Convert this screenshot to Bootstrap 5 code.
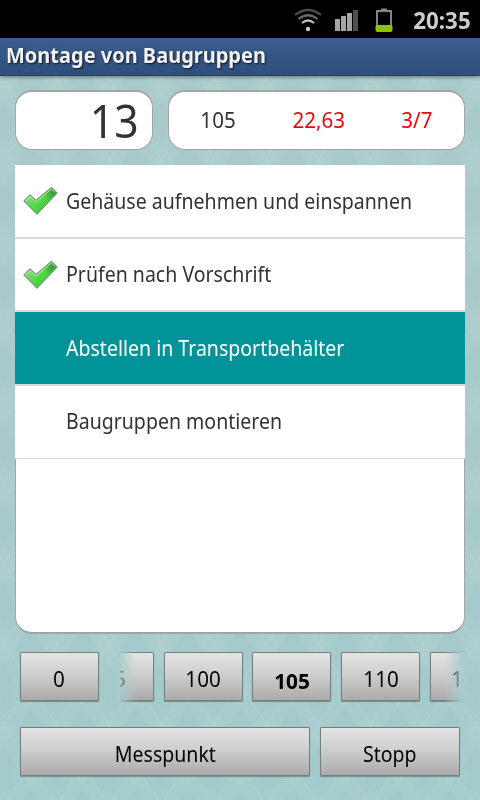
<!DOCTYPE html>
<html lang="de">
<head>
<meta charset="utf-8">
<meta name="viewport" content="width=device-width, initial-scale=1">
<title>Montage von Baugruppen</title>
<link rel="stylesheet" href="https://cdn.jsdelivr.net/npm/bootstrap@5.3.0/dist/css/bootstrap.min.css">
<style>
body{width:480px;height:800px;font-family:"Noto Sans","Open Sans",sans-serif;font-size:21px;line-height:28px;color:#333;
 background:
 repeating-linear-gradient(57deg,rgba(255,255,255,.08) 0 1px,transparent 1px 10px,rgba(60,130,140,.02) 10px 32px,rgba(255,255,255,.02) 32px 44px),
 repeating-linear-gradient(-57deg,rgba(255,255,255,.08) 0 1px,transparent 1px 10px,rgba(60,130,140,.02) 10px 32px,rgba(255,255,255,.02) 32px 44px),
 linear-gradient(#adcccd,#abcccd 70%,#a6cdce)}
.statusbar{height:38px;background:#000;color:#ccc;font-size:24px;padding:2px 9px 0 0}
.statusbar svg{margin-right:9px}
.titlebar{height:38px;background:linear-gradient(#3b5e8d,#2e4e7c);border-bottom:1px solid #274061;box-shadow:0 1px 4px rgba(0,0,0,.45);color:#f2f2f2;font-size:21px;text-shadow:1px 1px 2px #0a1526;padding:0 0 4px 6px}
.sq{display:inline-block;transform:scaleX(.93);white-space:nowrap}
.sq-l{transform-origin:left}
.sq-r{transform-origin:right}
.titlebar .sq{transform:scaleX(.952)}
.sq.num{transform:scaleX(.98)}
.fw-bold .sq.num{transform:scaleX(.99)}
.top-row{padding:14px 0 0 15px;gap:15px}
.panel{background:#fff;border:1px solid #a3a5a5;border-top-width:2px;border-radius:17px}
.counter{width:138px;height:60px;font-size:46px;padding:0 13px 2px 0}
.figures{width:297px;height:60px;padding:0 31px 2px 31px}
.figures .red{color:#de0c10}
.steps{width:450px;height:469px;margin:15px 0 0 15px;background:#fff;border:solid #a3a5a5;border-width:0 1px 2px;border-radius:0 0 17px 17px}
.steps ul{margin:0 -1px}
.steps li{height:73.5px;padding-left:7px;border-bottom:2px solid #d9dbdb;background:#fff}
.steps li:last-child{border-bottom-width:1px;padding-bottom:1px}
.steps li.current{background:#009499;color:#fff}
.steps .mark-slot{width:44px}
.key{height:49px;width:79px;flex:none;padding:5px 0 0;border:1px solid #777d7e;border-radius:1px;background:linear-gradient(#e3e3e3,#cfcfcf 45%,#ababab);box-shadow:0 1px 1px rgba(0,0,0,.3);color:#000;font-size:21px;line-height:28px}
.key-stop{width:140px}
.key-row{padding:18px 0 0 20px}
.action-row{padding:23px 20px 0;gap:10px}
.strip{width:344px;height:52px;margin-left:21px;overflow:hidden;-webkit-mask-image:linear-gradient(90deg,transparent -3px,#000 15px,#000 325px,transparent);mask-image:linear-gradient(90deg,transparent -3px,#000 15px,#000 325px,transparent)}
.strip .track{gap:9.7px;margin-left:-45px}
</style>
<script src="https://cdn.jsdelivr.net/npm/bootstrap@5.3.0/dist/js/bootstrap.bundle.min.js"></script>
</head>
<body class="overflow-hidden">
<svg width="0" height="0" class="position-absolute" aria-hidden="true">
 <defs>
  <linearGradient id="g" x1="0" y1="0" x2="1" y2="1"><stop offset="0" stop-color="#b5eeb0"/><stop offset=".4" stop-color="#62dc57"/><stop offset=".7" stop-color="#39d334"/><stop offset="1" stop-color="#35b034"/></linearGradient>
  <linearGradient id="d" x1="0" y1="1" x2="1" y2="0"><stop offset=".5" stop-color="#17701e" stop-opacity="0"/><stop offset=".95" stop-color="#17601e" stop-opacity=".65"/></linearGradient>
  <symbol id="tick" viewBox="0 0 36 30">
   <path d="M2 15 8 9 14 14.500 29.500 1.500 35 7 15 28Z" fill="url(#g)" stroke="#769d74" stroke-width="1.200" stroke-linejoin="round"/>
   <path d="M14 15.500 29.500 2.500 34 7 15 27Z" fill="url(#d)"/>
   <path d="M3.500 15 8 10.500 14 16 29.400 3.100 32.500 6" fill="none" stroke="#d3f7ce" stroke-opacity=".75"/>
  </symbol>
 </defs>
</svg>
<div class="statusbar d-flex align-items-center justify-content-end fw-bold">
 <svg width="110" height="38" viewBox="290 0 110 38" aria-hidden="true">
  <g fill="none" stroke-width="2.2"><path d="M295 14Q308 4 321 14" stroke="#4c4c4c"/><path d="M298.500 18Q308 10.500 317.500 18" stroke="#686868"/><path d="M302 22Q308 17 314 22" stroke="#bbb"/></g>
  <circle cx="308" cy="28" r="2.200" fill="#ccc"/>
  <g fill="#a5a5a5"><rect x="335" y="18" width="5" height="12"/><rect x="341" y="15" width="5" height="15"/><rect x="347" y="12" width="5" height="18"/></g><rect x="353" y="9" width="5" height="21" fill="#505050"/>
  <path d="M377 25V10H391V25M381 8.500H387" fill="none" stroke="#858585" stroke-width="2"/><rect x="375.500" y="24" width="17" height="7" rx="2" fill="#88c40a"/>
 </svg>
 <span class="sq sq-r">20:35</span>
</div>
<div class="titlebar d-flex align-items-center fw-bold"><span class="sq sq-l">Montage von Baugruppen</span></div>
<main>
 <div class="top-row d-flex">
  <div class="panel counter d-flex align-items-center justify-content-end"><span class="sq sq-r">13</span></div>
  <div class="panel figures d-flex align-items-center justify-content-between">
   <span class="sq num">105</span><span class="sq num red">22,63</span><span class="sq num red">3/7</span>
  </div>
 </div>
 <div class="steps">
  <ul class="list-unstyled">
   <li class="d-flex align-items-center"><span class="mark-slot"><svg width="36" height="30"><use href="#tick"/></svg></span><span class="sq sq-l">Gehäuse aufnehmen und einspannen</span></li>
   <li class="d-flex align-items-center"><span class="mark-slot"><svg width="36" height="30"><use href="#tick"/></svg></span><span class="sq sq-l">Prüfen nach Vorschrift</span></li>
   <li class="d-flex align-items-center current"><span class="mark-slot"></span><span class="sq sq-l">Abstellen in Transportbehälter</span></li>
   <li class="d-flex align-items-center"><span class="mark-slot"></span><span class="sq sq-l">Baugruppen montieren</span></li>
  </ul>
 </div>
 <div class="key-row d-flex">
  <button class="btn key"><span class="sq num">0</span></button>
  <div class="strip"><div class="track d-flex">
   <button class="btn key"><span class="sq num">95</span></button><button class="btn key"><span class="sq num">100</span></button><button class="btn key fw-bold pt-2"><span class="sq num">105</span></button><button class="btn key"><span class="sq num">110</span></button><button class="btn key"><span class="sq num">115</span></button>
  </div></div>
 </div>
 <div class="action-row d-flex">
  <button class="btn key flex-fill"><span class="sq">Messpunkt</span></button>
  <button class="btn key key-stop"><span class="sq">Stopp</span></button>
 </div>
</main>
</body>
</html>
